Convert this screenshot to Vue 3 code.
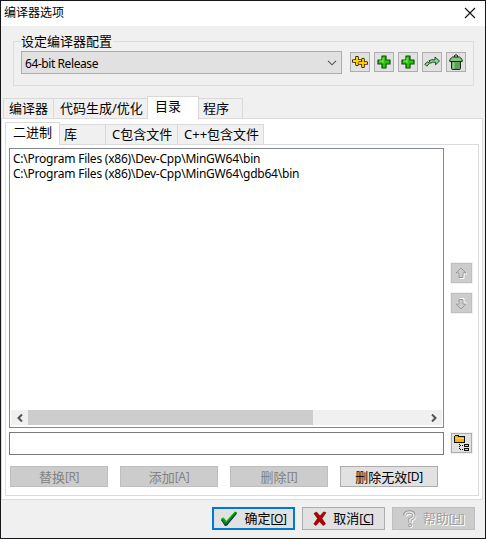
<script setup>
const plus = 'M5 1h4v4h4v4h-4v4h-4v-4h-4v-4h4z'
const tools = ['double', 'plus', 'plus', 'arrow', 'bin']
const tabs = [
  { t: '编译器', w: 51, p: 5 }, { t: '代码生成/优化', w: 93, p: 6 }, { t: '目录', w: 52, p: 7, on: true }, { t: '程序', w: 44, p: 4 },
]
const subTabs = [
  { t: '二进制', w: 55, p: 7, on: true }, { t: '库', w: 46, p: 4 }, { t: 'C包含文件', w: 72, p: 6 }, { t: 'C++包含文件', w: 86, p: 6 },
]
const paths = ['C:\\Program Files (x86)\\Dev-Cpp\\MinGW64\\bin', 'C:\\Program Files (x86)\\Dev-Cpp\\MinGW64\\gdb64\\bin']
const edits = [
  { t: '替换', k: 'R', off: true }, { t: '添加', k: 'A', off: true }, { t: '删除', k: 'I', off: true }, { t: '删除无效', k: 'D' },
]
</script>

<template>
  <div class="window">
    <header class="title"><span>编译器选项</span>
      <svg width="12" height="12" viewBox="0 0 12 12"><path d="M1 1L11 11M11 1L1 11" stroke="#111" stroke-width="1.1" /></svg>
    </header>
    <fieldset class="group">
      <legend>设定编译器配置</legend>
      <div class="combo"><span>64-bit Release</span>
        <svg width="10" height="6" viewBox="0 0 10 6"><path d="M1 .8L5 4.8L9 .8" fill="none" stroke="#555" stroke-width="1.1" /></svg>
      </div>
      <div class="tools">
        <button v-for="(k, i) in tools" :key="i" class="tool">
          <svg v-if="k === 'plus'" width="14" height="14" viewBox="0 0 14 14">
            <path :d="plus" fill="#2cc30c" stroke="#0c4a08" stroke-width="1.2" stroke-linejoin="round" />
            <path d="M6 8V2.5M2.5 6H6" stroke="#8cf060" fill="none" /><path d="M8.5 9V12.5M9 8.5h4" stroke="#118a06" fill="none" />
          </svg>
          <svg v-else-if="k === 'double'" width="16" height="12" viewBox="0 0 16 12">
            <path d="M5 1.500V8.500M1.500 5H8.500" stroke="#3d2a00" stroke-width="3.600" stroke-linecap="round" />
            <path d="M5 1V9M1 5H9" stroke="#ffd51a" stroke-width="1.900" />
            <path d="M11 3.500V10.500M7.500 7H14.500" stroke="#3d2a00" stroke-width="3.600" stroke-linecap="round" />
            <path d="M11 3V11M6.500 7H15" stroke="#ffc800" stroke-width="1.900" />
          </svg>
          <svg v-else-if="k === 'arrow'" width="16" height="12" viewBox="0 0 16 12">
            <path d="M.8 8.200L3.500 5.800L5.500 7.200L2.800 10.200Z" fill="#83d98b" stroke="#15391d" stroke-width=".9" />
            <path d="M5 4.700Q7.500 3.200 11 3.800V1L15.500 5L11.500 8.800V6.300Q8.500 5.600 6.500 7.200Z" fill="#83d98b" stroke="#15391d" stroke-width=".9" />
          </svg>
          <svg v-else width="14" height="16" viewBox="0 0 14 16">
            <path d="M5.500 3V1.500q1.500-1.500 3 0V3" fill="none" stroke="#111" />
            <path d="M2.500 7.500h9v7q0 1-1 1h-7q-1 0-1-1z" fill="#5fa05c" stroke="#182818" />
            <path d="M.8 7.500V5.500L3.500 3h7l2.700 2.500v2z" fill="#86c582" stroke="#182818" />
            <path d="M4.500 8.500v6" stroke="#90cf8a" stroke-width="2" />
          </svg>
        </button>
      </div>
    </fieldset>

    <nav class="tabs outer"><div v-for="x in tabs" :key="x.t" class="tab" :class="{ on: x.on }" :style="{ width: x.w + 'px', paddingLeft: x.p + 'px' }">{{ x.t }}</div></nav>
    <main class="pane">
      <nav class="tabs inner"><div v-for="x in subTabs" :key="x.t" class="tab" :class="{ on: x.on }" :style="{ width: x.w + 'px', paddingLeft: x.p + 'px' }">{{ x.t }}</div></nav>
      <section class="sheet">
        <div class="row">
          <div class="list">
            <div v-for="p in paths" :key="p" class="path">{{ p }}</div>
            <div class="scroll">
              <i><svg width="6" height="8" viewBox="0 0 6 8"><path d="M5 .5L1.500 4L5 7.500" /></svg></i>
              <b></b>
              <i><svg width="6" height="8" viewBox="0 0 6 8"><path d="M1 .5L4.500 4L1 7.500" /></svg></i>
            </div>
          </div>
          <div class="moves">
            <button v-for="d in ['up', 'down']" :key="d" class="square move">
              <svg width="13" height="13" viewBox="0 0 13 13" :class="d">
                <path d="M6.500 2L11.500 7H9V11.500H5V7H2Z" class="hi" />
                <path d="M6 1L11 6H8V10.500H4V6H1Z" class="lo" />
              </svg>
            </button>
          </div>
        </div>
        <div class="row entry">
          <div class="input"></div>
          <button class="square browse">
            <svg width="16" height="16" viewBox="0 0 16 16" shape-rendering="crispEdges">
              <path d="M1 0h4v1h6v7H0V1h1z" fill="#111" /><path d="M1 1h3v1h6v5H1z" fill="#ffb000" /><path d="M1 3h9v1H1z" fill="#ffd25a" />
              <path d="M5 9h1v1H5zM6 10h1v1H6zM8 10h1v1H8zM5 11h1v1H5zM5 13h1v1H5zM6 14h1v1H6zM8 14h1v1H8zM10 9h5v3h-5zM10 13h5v3h-5z" fill="#111" />
              <path d="M11 10h3v1h-3zM11 14h3v1h-3z" fill="#ffc84a" />
            </svg>
          </button>
        </div>
        <div class="edits">
          <button v-for="e in edits" :key="e.k" class="btn" :class="{ off: e.off }">{{ e.t }}<span class="k">[{{ e.k }}]</span></button>
        </div>
      </section>
    </main>
    <footer class="footer">
      <button class="btn ok">
        <svg width="18" height="16" viewBox="0 0 18 16"><path d="M1 9L3.500 7.500L6.500 11L15 1.500L17 2.500L7 14.500L5 15Z" fill="#001060" /><path d="M1 8L3.500 6.500L6.500 10L15 .5L17 1.500L6.500 13.500L4.500 13.500Z" fill="#008a10" /><path d="M1.500 8L3 7L6 11L15 1" stroke="#12c512" fill="none" /></svg>
        <span>确定<span class="k">[<u>O</u>]</span></span>
      </button>
      <button class="btn cancel">
        <svg width="14" height="15" viewBox="0 0 14 15"><path d="M1 2.500L3.500 1L7 5L10.500 1L13 1.500L9 7.500L12.500 13L10 14.500L6.500 10.500L3 14.500L.8 13L4.500 7.500Z" fill="#b40000" stroke="#650000" stroke-width=".6" /></svg>
        <span>取消<span class="k">[<u>C</u>]</span></span>
      </button>
      <button class="btn off help">
        <svg width="14" height="18" viewBox="0 0 14 18" fill="none">
          <path d="M2.500 6Q3 3 7 3T11.500 6.500Q11.500 8.500 8 10V13" stroke="#fff" stroke-width="3.600" />
          <circle cx="8" cy="16" r="1.500" stroke="#fff" />
          <path d="M1.500 5.500Q2 2 6.500 2T11 5.500Q11 8 7 9.500V12.500" stroke="#999" stroke-width="3.400" />
          <path d="M2 5Q2.500 2 6.500 2T11 5.500Q11 8 7 9.500V12" stroke="#e4e4e4" stroke-width="1.700" />
          <circle cx="7" cy="15.300" r="1.500" fill="#e4e4e4" stroke="#999" />
        </svg>
        <span>帮助<span class="k">[<u>H</u>]</span></span>
      </button>
    </footer>
  </div>
</template>

<style>
body { margin: 0; background: #f0f0f0; }
</style>
<style scoped>
* { box-sizing: border-box; }
.window { width: 486px; height: 539px; border: 1px solid #17161a; background: #f0f0f0; color: #000; font: 13px/16px "Noto Sans", "Noto Sans CJK SC", sans-serif; display: flex; flex-direction: column; overflow: hidden; white-space: nowrap; }
svg { display: block; flex: none; }
button { font: inherit; color: inherit; padding: 0; border-radius: 0; margin: 0; }
.title { height: 25px; flex: none; background: #fff; display: flex; align-items: center; justify-content: space-between; padding: 0 9px 1px 3px; font-size: 12px; }
.group { flex: none; height: 51px; margin: 9px 11px 0 12px; padding: 3px 7px 0 7px; border: 1px solid #dcdcdc; display: flex; min-width: 0; }
legend { padding: 0 1px 0 0; height: 13px; line-height: 13px; }
.combo { width: 321px; height: 23px; border: 1px solid #adadad; background: #e1e1e1; display: flex; align-items: center; justify-content: space-between; padding: 0 4px 0 3px; font-size: 12px; letter-spacing: -.42px; }
.combo span { position: relative; top: 1px; }
.tools { display: flex; gap: 4px; margin: 1px 0 0 8px; }
.tool { width: 20px; height: 20px; border: 1px solid #adadad; background: #e1e1e1; display: flex; align-items: center; justify-content: center; }
.tabs { display: flex; align-items: flex-end; flex: none; position: relative; }
.outer { height: 23px; margin: 9px 0 0 2px; }
.tab { height: 20px; border: 1px solid #d9d9d9; border-left: 0; border-bottom: 0; background: #f0f0f0; padding-top: 1px; line-height: 16px; }
.tab:first-child { border-left: 1px solid #d9d9d9; }
.tab:has(+ .on) { border-right: 0; }
.tab.on { height: 23px; background: #fff; border-left: 1px solid #d9d9d9; margin-bottom: -1px; }
.pane { width: 482px; height: 382px; flex: none; border: 1px solid #dcdcdc; background: #fff; padding: 3px; }
.inner { height: 22px; }
.sheet { width: 474px; height: 352px; border: 1px solid #dcdcdc; padding: 3px; }
.row { display: flex; }
.list { width: 435px; height: 280px; flex: none; border: 1px solid #828790; padding: 2px 1px; display: flex; flex-direction: column; }
.path { height: 15px; line-height: 15px; font-size: 12px; letter-spacing: -.23px; padding-left: 2px; }
.scroll { margin-top: auto; height: 15px; background: #f0f0f0; display: flex; }
.scroll i { width: 17px; display: flex; align-items: center; justify-content: center; }
.scroll b { width: 285px; background: #cdcdcd; margin-right: auto; }
.scroll path { fill: none; stroke: #505050; stroke-width: 2; }
.moves { padding: 114px 0 0 6px; display: flex; flex-direction: column; gap: 8px; }
.square { width: 23px; height: 22px; flex: none; border: 1px solid #f0f0f0; display: flex; align-items: center; justify-content: center; }
.move { background: #ccc; box-shadow: inset 0 0 0 1px #bfbfbf; }
.move .hi { fill: #fff; stroke: #fff; } .move .lo { fill: #ccc; stroke: #999; } .down { transform: scaleY(-1); }
.entry { margin-top: 4px; gap: 6px; }
.input { width: 435px; height: 23px; flex: none; border: 1px solid #7a7a7a; background: #fff; }
.browse { background: #e1e1e1; box-shadow: inset 0 0 0 1px #adadad; }
.edits { display: flex; gap: 12px; margin: 11px 0 0 1px; }
.btn { border: 1px solid #adadad; background: #e1e1e1; display: flex; align-items: center; justify-content: center; }
.edits .btn { width: 98px; height: 21px; flex: none; }
.k { font-size: 12px; letter-spacing: -.4px; }
.btn.off { background: #ccc; border-color: #bfbfbf; color: #838383; }
.footer { display: flex; gap: 7px; padding: 7px 0 0 211px; }
.footer .btn { width: 83px; height: 23px; gap: 6px; }
.footer .ok { border: 2px solid #0078d7; }
.footer .help { color: #a0a0a0; text-shadow: 1px 1px #fff; }
</style>
